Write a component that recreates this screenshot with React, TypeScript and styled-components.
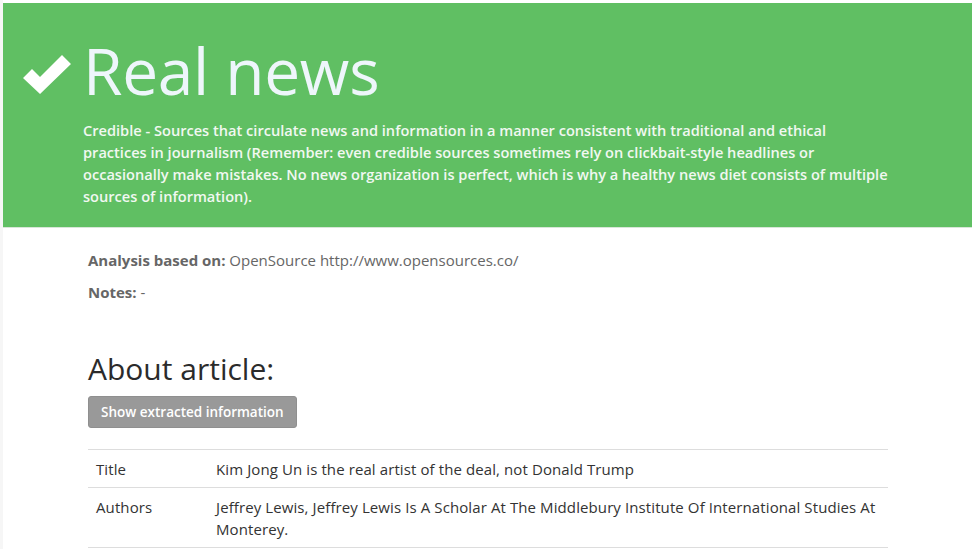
import React from "react";
import styled, { createGlobalStyle } from "styled-components";

const GlobalStyle = createGlobalStyle`
  html, body {
    margin: 0;
    padding: 0;
    background: #fff;
  }
  body {
    font-family: "Open Sans", "Noto Sans", sans-serif;
    color: #333;
  }
`;

const Page = styled.div`
  padding: 3px 1px 0 3px;
  background: linear-gradient(to right, #f6f6f6 3px, #fff 3px);
  min-height: 546px;
`;

const Banner = styled.header`
  background-color: #60bf63;
  border-bottom: 1px solid #d8e6d8;
  display: flex;
  align-items: flex-start;
  padding: 0 20px 18px 20px;
  height: 206px;
`;

const Check = styled.svg`
  flex: none;
  width: 48px;
  height: 40px;
  margin-top: 51px;
  margin-right: 12px;
`;

const BannerBody = styled.div`
  width: 807px;
`;

const Verdict = styled.h1`
  margin: 28px 0 0;
  font-size: 64px;
  font-weight: 400;
  line-height: 80px;
  color: #eef6fb;
  letter-spacing: -0.3px;
`;

const Description = styled.p`
  margin: 8px 0 0;
  font-size: 14.6px;
  font-weight: 600;
  line-height: 22px;
  color: #f1f8f1;
`;

const Content = styled.main`
  padding: 0 82px 0 85px;
`;

const InfoLine = styled.p<{ $first?: boolean }>`
  margin: ${p => (p.$first ? "20px" : "8px")} 0 0;
  font-size: 15px;
  line-height: 24px;
  color: #666;
`;

const Label = styled.b`
  font-weight: 700;
`;

const SectionTitle = styled.h2`
  margin: 46px 0 0;
  font-size: 30px;
  font-weight: 400;
  line-height: 38px;
  color: #2b2b2b;
`;

const ToggleButton = styled.button`
  margin-top: 8px;
  background-color: #999;
  border: 1px solid #8f8f8f;
  border-radius: 3px;
  color: #fff;
  font-family: inherit;
  font-size: 13.5px;
  font-weight: 600;
  height: 32px;
  padding: 0 12px;
  cursor: pointer;
`;

const Table = styled.table`
  margin-top: 21px;
  width: 800px;
  table-layout: fixed;
  border-collapse: collapse;
  font-size: 15px;
  letter-spacing: 0.1px;
  line-height: 22px;
  color: #333;
  & td {
    border-top: 1px solid #ddd;
    padding: 8px 8px 7px;
    vertical-align: top;
  }
  & tr:last-child td {
    border-bottom: 1px solid #ddd;
  }
`;

const KeyCell = styled.td`
  width: 104px;
`;

const rows = [
  { key: "Title", value: "Kim Jong Un is the real artist of the deal, not Donald Trump" },
  {
    key: "Authors",
    value:
      "Jeffrey Lewis, Jeffrey Lewis Is A Scholar At The Middlebury Institute Of International Studies At Monterey.",
  },
];

export default function App() {
  return (
    <Page>
      <GlobalStyle />
      <Banner>
        <Check viewBox="0 0 48 40">
          <polygon points="0,24 9,15 17,23 39,1 48,10 17,40" fill="#fff" />
        </Check>
        <BannerBody>
          <Verdict>Real news</Verdict>
          <Description>
            Credible - Sources that circulate news and information in a manner consistent with
            traditional and ethical practices in journalism (Remember: even credible sources
            sometimes rely on clickbait-style headlines or occasionally make mistakes. No news
            organization is perfect, which is why a healthy news diet consists of multiple sources
            of information).
          </Description>
        </BannerBody>
      </Banner>
      <Content>
        <InfoLine $first>
          <Label>Analysis based on:</Label> OpenSource http://www.opensources.co/
        </InfoLine>
        <InfoLine>
          <Label>Notes:</Label> -
        </InfoLine>
        <SectionTitle>About article:</SectionTitle>
        <ToggleButton>Show extracted information</ToggleButton>
        <Table>
          <tbody>
            {rows.map(r => (
              <tr key={r.key}>
                <KeyCell>{r.key}</KeyCell>
                <td>{r.value}</td>
              </tr>
            ))}
          </tbody>
        </Table>
      </Content>
    </Page>
  );
}
